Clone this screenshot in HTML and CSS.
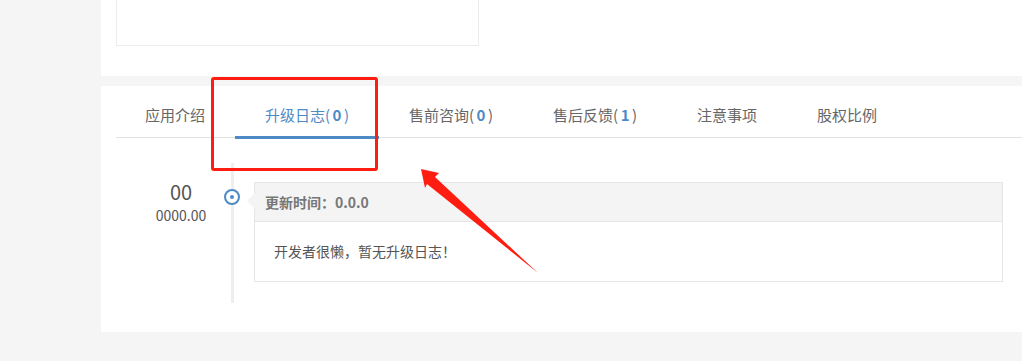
FILE: index.html
```html
<!DOCTYPE html>
<html lang="zh-CN">
<head>
    <meta charset="UTF-8">
    <title>升级日志</title>
    <link rel="stylesheet" href="styles.css">
</head>
<body>
<div class="page">
    <div class="top-panel">
        <div class="desc-box"></div>
    </div>

    <div class="main-panel">
        <ul class="tabs">
            <li class="tab">应用介绍</li>
            <li class="tab active">升级日志(<b>0</b>)</li>
            <li class="tab">售前咨询(<b>0</b>)</li>
            <li class="tab">售后反馈(<b>1</b>)</li>
            <li class="tab">注意事项</li>
            <li class="tab">股权比例</li>
        </ul>

        <div class="timeline">
            <div class="tl-date">
                <div class="tl-day">00</div>
                <div class="tl-year">0000.00</div>
            </div>
            <div class="tl-axis">
                <span class="tl-dot"></span>
            </div>
            <div class="tl-card">
                <div class="tl-card-head">更新时间：0.0.0</div>
                <div class="tl-card-body">开发者很懒，暂无升级日志！</div>
            </div>
        </div>
    </div>
</div>

<!-- annotation overlay -->
<div class="mark-box"></div>
<svg class="mark-arrow" width="1022" height="361" viewBox="0 0 1022 361">
    <polygon points="421,169 439,173 435,177 538,273 427,184 425,188" fill="#ff1d12"/>
</svg>
</body>
</html>
```

FILE: styles.css
```css
:root {
    --blue: #4d8ac6;
    --text: #666;
    --line: #e6e6e6;
}

body {
    margin: 0;
    padding: 0;
    background: #f5f5f5;
    font-family: "Microsoft YaHei", "Noto Sans CJK SC", "Liberation Sans", sans-serif;
    color: var(--text);
}

.page {
    margin-left: 101px;
}

.top-panel {
    background: #fff;
    height: 76px;
    padding: 0 15px;
}

.desc-box {
    width: 361px;
    height: 45px;
    border: 1px solid #ececec;
    border-top: none;
}

.main-panel {
    background: #fff;
    margin-top: 10px;
    height: 246px;
    padding-left: 15px;
}

.tabs {
    display: flex;
    margin: 0;
    padding: 0 0 0 0;
    list-style: none;
    border-bottom: 1px solid #e2e2e2;
}

.tab {
    padding: 18px 30px 11px;
    font-size: 15px;
    line-height: 21px;
    color: var(--text);
    border-bottom: 3px solid transparent;
    margin-bottom: -2px;
}

.tab:first-child {
    padding-left: 29px;
}

.tab b {
    color: var(--blue);
    padding: 0 2.5px;
}

.tab.active {
    color: var(--blue);
    border-bottom-color: var(--blue);
}

.timeline {
    display: flex;
    margin-top: 25px;
    height: 140px;
}

.tl-date {
    width: 100px;
    padding: 16px 0 0 15px;
    text-align: center;
    color: #555;
}

.tl-day {
    font-size: 20px;
    line-height: 26px;
}

.tl-year {
    font-size: 14px;
    line-height: 20px;
}

.tl-axis {
    position: relative;
    width: 3px;
    background: #eeeeee;
}

.tl-dot {
    position: absolute;
    left: -7px;
    top: 26px;
    width: 12px;
    height: 12px;
    border: 2px solid var(--blue);
    border-radius: 50%;
    background: #fff;
}

.tl-dot::after {
    content: "";
    position: absolute;
    left: 4px;
    top: 4px;
    width: 4px;
    height: 4px;
    border-radius: 50%;
    background: var(--blue);
}

.tl-card {
    position: relative;
    margin: 19px 0 0 20px;
    width: 747px;
    height: 98px;
    border: 1px solid var(--line);
    font-size: 14px;
}

.tl-card::before {
    content: "";
    position: absolute;
    left: -8px;
    top: 10px;
    border-style: solid;
    border-width: 8px 8px 8px 0;
    border-color: transparent #f4f4f4 transparent transparent;
}

.tl-card-head {
    height: 38px;
    line-height: 38px;
    padding-left: 10px;
    background: #f4f4f4;
    border-bottom: 1px solid var(--line);
    font-weight: bold;
    color: #777;
}

.tl-card-body {
    padding: 19px 19px;
    line-height: 20px;
    color: #555;
}

.mark-box {
    position: absolute;
    left: 211px;
    top: 77px;
    width: 161px;
    height: 88px;
    border: 3px solid #ff1d12;
    border-radius: 3px;
}

.mark-arrow {
    position: absolute;
    left: 0;
    top: 0;
    pointer-events: none;
}
```
